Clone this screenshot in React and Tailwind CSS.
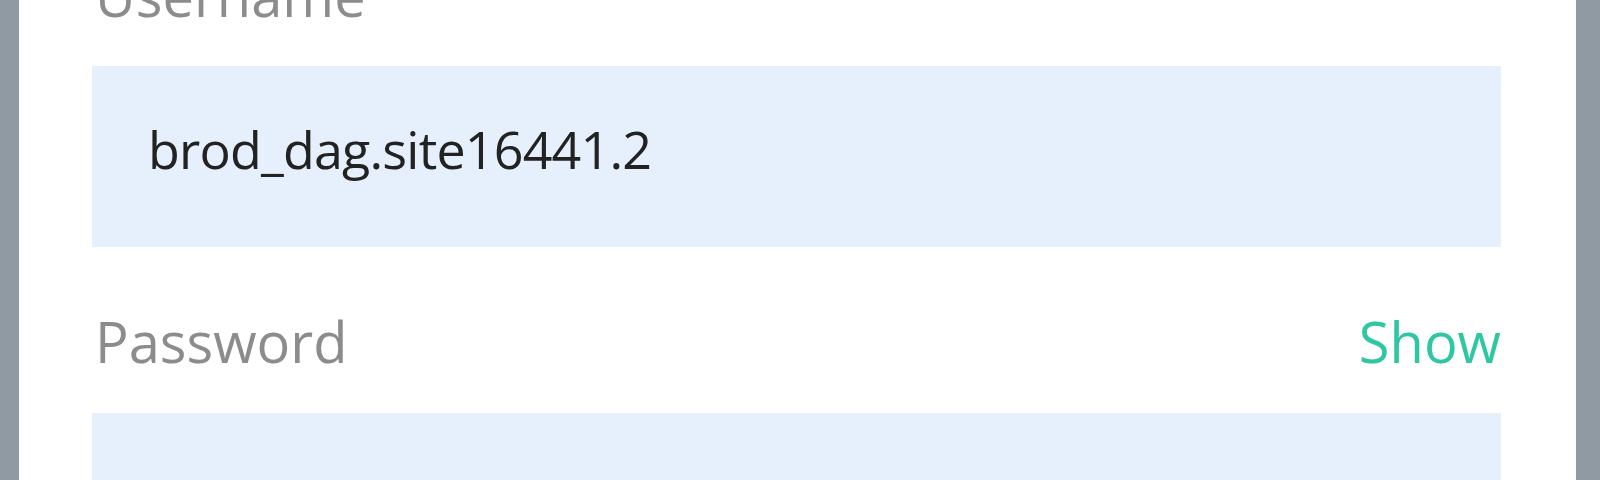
import React from 'react'

const font = { fontFamily: '"Open Sans", "Liberation Sans", sans-serif' }

function Field({ label, action, children }) {
  return (
    <div className="flex flex-col">
      <div className="flex items-center justify-between h-[56px] text-[56px] leading-none">
        <span className="pl-[3px] text-[#8c8c8c]">{label}</span>
        {action && <button className="text-[#2fc6a2] leading-none">{action}</button>}
      </div>
      {children}
    </div>
  )
}

export default function App() {
  return (
    <div className="flex h-[480px] w-full overflow-hidden bg-[#8f9aa3]" style={font}>
      <div className="ml-[19px] w-[1557px] bg-white pl-[73px] pr-[75px]">
        <div className="-mt-[33px] flex flex-col gap-[66px]">
          <Field label="Username">
            <input
              readOnly
              defaultValue="brod_dag.site16441.2"
              className="mt-[43px] h-[181px] w-full bg-[#e6effc] pl-[56px] pb-[17px] text-[52px] leading-none tracking-[-0.8px] text-[#222] outline-none"
              style={font}
            />
          </Field>
          <Field label="Password" action="Show">
            <input
              readOnly
              type="password"
              className="mt-[44px] h-[181px] w-full bg-[#e6effc] pl-[56px] text-[50px] outline-none"
              style={font}
            />
          </Field>
        </div>
      </div>
    </div>
  )
}
